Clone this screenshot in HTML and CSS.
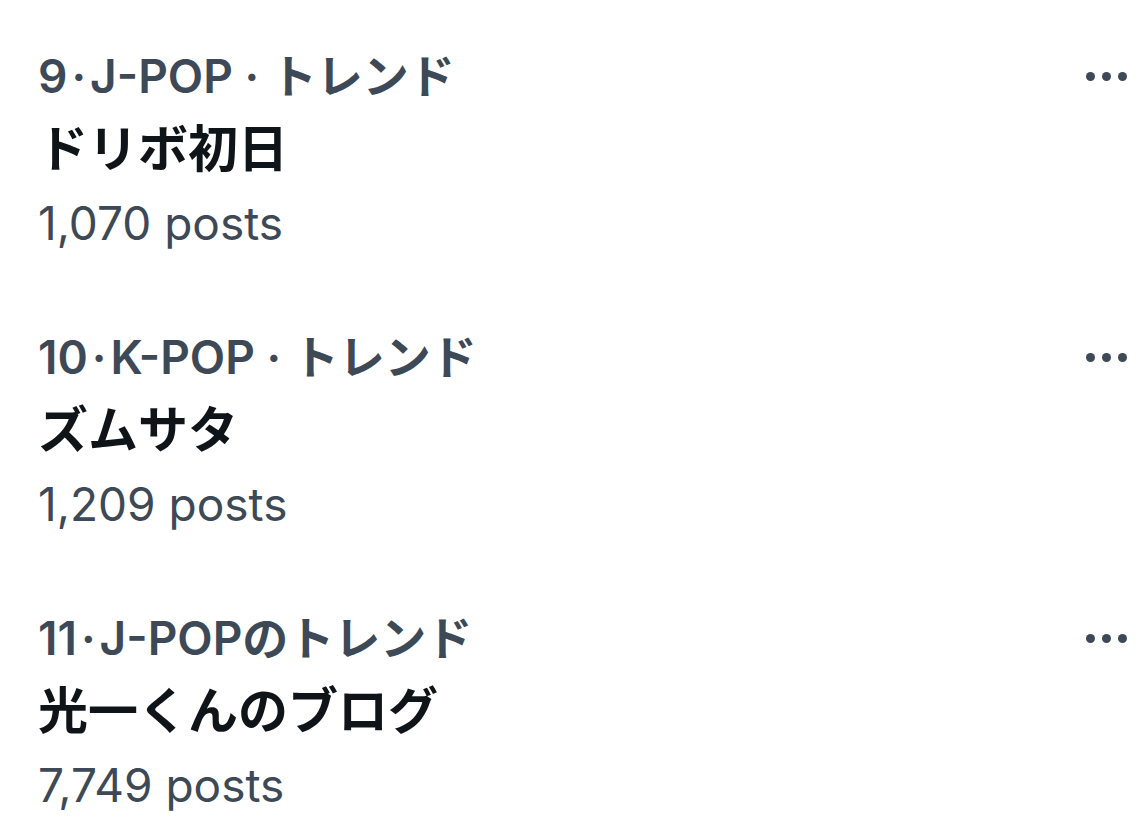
FILE: index.html
```html
<!DOCTYPE html>
<html lang="ja">
<head>
    <meta charset="UTF-8">
    <meta name="viewport" content="width=device-width, initial-scale=1.0">
    <title>Trends</title>
    <link rel="stylesheet" href="styles.css">
</head>
<body>
    <div class="trend-list">
        <div class="trend">
            <div class="trend-body">
                <div class="trend-meta">9<span class="dot">·</span>J-POP · トレンド</div>
                <div class="trend-title">ドリボ初日</div>
                <div class="trend-count">1,070 posts</div>
            </div>
            <div class="more"><span></span><span></span><span></span></div>
        </div>
        <div class="trend">
            <div class="trend-body">
                <div class="trend-meta">10<span class="dot">·</span>K-POP · トレンド</div>
                <div class="trend-title">ズムサタ</div>
                <div class="trend-count">1,209 posts</div>
            </div>
            <div class="more"><span></span><span></span><span></span></div>
        </div>
        <div class="trend">
            <div class="trend-body">
                <div class="trend-meta">11<span class="dot">·</span>J-POPのトレンド</div>
                <div class="trend-title">光一くんのブログ</div>
                <div class="trend-count">7,749 posts</div>
            </div>
            <div class="more"><span></span><span></span><span></span></div>
        </div>
    </div>
</body>
</html>
```

FILE: styles.css
```css
* {
    margin: 0;
    padding: 0;
    box-sizing: border-box;
}

body {
    font-family: Inter, "Noto Sans CJK JP", sans-serif;
    background-color: #fff;
    width: 1139px;
    height: 816px;
    overflow: hidden;
}

.trend-list {
    padding: 40px 0 0 38px;
    display: flex;
    flex-direction: column;
    gap: 61px;
}

.trend {
    display: flex;
    justify-content: space-between;
    align-items: flex-start;
}

.trend-meta {
    font-size: 46px;
    line-height: 73px;
    font-weight: 600;
    color: #3d4956;
}

.dot {
    margin: 0 4px;
}

.trend-title {
    font-size: 50px;
    line-height: 73px;
    font-weight: 700;
    color: #0f1419;
}

.trend-count {
    font-size: 46px;
    line-height: 74px;
    font-weight: 400;
    color: #3d4956;
}

/* three-dot menu */
.more {
    display: flex;
    gap: 7px;
    padding-top: 32px;
    padding-right: 12px;
}

.more span {
    width: 9px;
    height: 9px;
    border-radius: 50%;
    background-color: #3d4956;
}
```
